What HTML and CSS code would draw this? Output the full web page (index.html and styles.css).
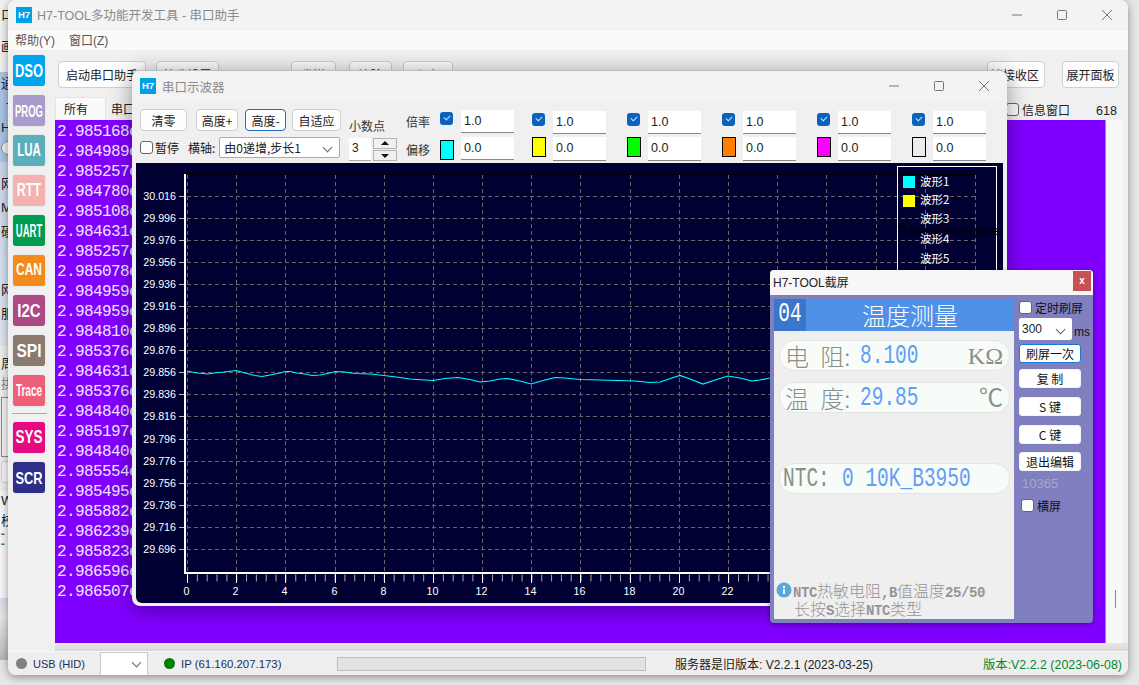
FILE: index.html
```html
<!DOCTYPE html>
<html lang="zh-CN">
<head>
  <meta charset="UTF-8" />
  <title>H7-TOOL 串口助手</title>
  <link rel="stylesheet" href="styles.css">
</head>
<body>
  <!-- window behind, only a sliver shows -->
  <div class="back-win">
    <div class="back-top"><span>口</span><span class="b2">画</span></div>
    <div class="back-blue"><span>通</span><span class="b3">认</span><span>H</span><i class="back-radio"></i></div>
    <div class="back-mid"><span>网</span><span>M</span><span>硬</span><span class="b4">网</span><span>服</span></div>
    <div class="back-low"><span>周</span><span class="muted">拱</span><i class="back-box"></i><i class="back-btn"></i></div>
    <div class="back-end"><span>W</span><span>校</span><span class="tiny">“</span><span class="tiny">“</span></div>
    <div class="back-bar"></div>
  </div>

  <div class="main-win">
    <div class="title-bar">
      <span class="logo">H7</span>
      <span class="title-text">H7-TOOL多功能开发工具 - 串口助手</span>
      <div class="win-btns">
        <svg width="12" height="12" viewBox="0 0 12 12"><path d="M1 6h10" stroke="#777" fill="none"/></svg>
        <svg width="12" height="12" viewBox="0 0 12 12"><rect x="1.5" y="1.5" width="9" height="9" rx="1" stroke="#777" fill="none"/></svg>
        <svg width="12" height="12" viewBox="0 0 12 12"><path d="M1 1l10 10M11 1L1 11" stroke="#777" fill="none"/></svg>
      </div>
    </div>
    <div class="menu-bar"><span>帮助(Y)</span><span>窗口(Z)</span></div>

    <div class="main-body">
      <div class="side">
        <div class="tool t-dso"><span>DSO</span></div>
        <div class="tool t-prog"><span>PROG</span></div>
        <div class="tool t-lua"><span>LUA</span></div>
        <div class="tool t-rtt"><span>RTT</span></div>
        <div class="tool t-uart"><span>UART</span></div>
        <div class="tool t-can"><span>CAN</span></div>
        <div class="tool t-i2c"><span>I2C</span></div>
        <div class="tool t-spi"><span>SPI</span></div>
        <div class="tool t-trace"><span>Trace</span></div>
        <div class="side-line"></div>
        <div class="tool t-sys"><span>SYS</span></div>
        <div class="tool t-scr"><span>SCR</span></div>
      </div>

      <div class="content">
        <div class="top-btns">
          <button class="btn b-start">启动串口助手</button>
          <button class="btn b-set">接收设置</button>
          <button class="btn b-a">发送</button>
          <button class="btn b-b">清除</button>
          <button class="btn b-c">保存</button>
          <button class="btn b-clear">清接收区</button>
          <button class="btn b-open">展开面板</button>
        </div>
        <div class="tab-row">
          <span class="tab tab-on">所有</span>
          <span class="tab">串口</span>
          <span class="info-check"><i class="check"></i>信息窗口</span>
          <span class="count">618</span>
        </div>
        <div class="log-wrap">
          <div class="log">
            <div>2.985168e</div>
            <div>2.984989e</div>
            <div>2.985257e</div>
            <div>2.984780e</div>
            <div>2.985108e</div>
            <div>2.984631e</div>
            <div>2.985257e</div>
            <div>2.985078e</div>
            <div>2.984959e</div>
            <div>2.984959e</div>
            <div>2.984810e</div>
            <div>2.985376e</div>
            <div>2.984631e</div>
            <div>2.985376e</div>
            <div>2.984840e</div>
            <div>2.985197e</div>
            <div>2.984840e</div>
            <div>2.985554e</div>
            <div>2.985495e</div>
            <div>2.985882e</div>
            <div>2.986239e</div>
            <div>2.985823e</div>
            <div>2.986596e</div>
            <div>2.986507e</div>
          </div>
          <div class="scroll"><i></i></div>
        </div>
        <div class="under-log"></div>
      </div>
    </div>

    <div class="status">
      <i class="dot dot-gray"></i><span class="s-usb">USB (HID)</span>
      <span class="s-select"><i class="chev"></i></span>
      <i class="dot dot-green"></i><span class="s-ip">IP (61.160.207.173)</span>
      <span class="s-progress"></span>
      <span class="s-server">服务器是旧版本: V2.2.1 (2023-03-25)</span>
      <span class="s-ver">版本:V2.2.2 (2023-06-08)</span>
    </div>
  </div>

  <!-- scope window -->
  <div class="scope-win">
    <div class="scope-title">
      <span class="logo">H7</span>
      <span class="title-text">串口示波器</span>
      <div class="win-btns">
        <svg width="12" height="12" viewBox="0 0 12 12"><path d="M1 6h10" stroke="#777" fill="none"/></svg>
        <svg width="12" height="12" viewBox="0 0 12 12"><rect x="1.5" y="1.5" width="9" height="9" rx="1" stroke="#777" fill="none"/></svg>
        <svg width="12" height="12" viewBox="0 0 12 12"><path d="M1 1l10 10M11 1L1 11" stroke="#777" fill="none"/></svg>
      </div>
    </div>
    <div class="scope-tools">
      <div class="tools-left">
        <div class="tools-row">
          <button class="btn sb sb-zero">清零</button>
          <button class="btn sb sb-up">高度+</button>
          <button class="btn sb sb-down">高度-</button>
          <button class="btn sb sb-auto">自适应</button>
        </div>
        <div class="tools-row2">
          <i class="check"></i><span class="lab-pause">暂停</span>
          <span class="lab-axis">横轴:</span>
          <span class="axis-select">由0递增,步长1<i class="chev"></i></span>
        </div>
      </div>
      <div class="decimals">
        <div class="dec-label">小数点</div>
        <div class="spin">
          <span class="spin-val">3</span>
          <span class="spin-btns"><b class="up"></b><b class="down"></b></span>
        </div>
      </div>
      <div class="ch-labels"><span>倍率</span><span>偏移</span></div>
      <div class="channels">
        <div class="ch ch-first">
          <i class="ch-check"></i><span class="ch-input">1.0</span>
          <i class="swatch s-cyan"></i><span class="ch-input">0.0</span>
        </div>
        <div class="ch">
          <i class="ch-check"></i><span class="ch-input">1.0</span>
          <i class="swatch s-yellow"></i><span class="ch-input">0.0</span>
        </div>
        <div class="ch">
          <i class="ch-check"></i><span class="ch-input">1.0</span>
          <i class="swatch s-green"></i><span class="ch-input">0.0</span>
        </div>
        <div class="ch">
          <i class="ch-check"></i><span class="ch-input">1.0</span>
          <i class="swatch s-orange"></i><span class="ch-input">0.0</span>
        </div>
        <div class="ch">
          <i class="ch-check"></i><span class="ch-input">1.0</span>
          <i class="swatch s-pink"></i><span class="ch-input">0.0</span>
        </div>
        <div class="ch">
          <i class="ch-check"></i><span class="ch-input">1.0</span>
          <i class="swatch s-gray"></i><span class="ch-input">0.0</span>
        </div>
      </div>
    </div>

    <!-- viewBox uses page coordinates -->
    <svg class="plot" width="867" height="440" viewBox="136 163 867 440">
      <rect x="136" y="163" width="867" height="440" fill="#000033"/>
      <path d="M185 174.5H975" stroke="#000" fill="none"/>
      <g stroke="#666" stroke-dasharray="4 3" fill="none">
        <path d="M187 196.5H975M187 218.5H975M187 240.5H975M187 262.5H975M187 284.5H975M187 306.5H975M187 328.5H975M187 350.5H975M187 372.5H975M187 394.5H975M187 416.5H975M187 439.5H975M187 461.5H975M187 483.5H975M187 505.5H975M187 527.5H975M187 549.5H975"/>
        <path d="M187.5 175V572M236.5 175V572M285.5 175V572M335.5 175V572M384.5 175V572M433.5 175V572M482.5 175V572M531.5 175V572M580.5 175V572M630.5 175V572M679.5 175V572M728.5 175V572M777.5 175V572M826.5 175V572M876.5 175V572M925.5 175V572M975.5 175V572"/>
      </g>
      <path d="M187 371L192 372L198 373L208 374L214 373L224 372L236 370.5L245 373L255 375.5L262 376.5L270 375L280 373L285 371.5L290 371.5L297 373L305 374L312 375.5L320 375L330 373L335 371.5L345 372L355 373.5L370 374L384 375.5L400 377.5L410 379L425 380L433 380.5L445 378.5L458 377.5L470 379.5L480 382L490 381L500 379L507 378.5L520 381L531 384L545 380L555 377.5L565 378L580 379.5L600 380L635 381L650 382.5L660 382L675 377L680 375.5L690 379L703 384L715 380L728 376L740 378L752 381L760 380L770 378" stroke="#00ffff" stroke-width="1.2" fill="none"/>
      <!-- axes -->
      <path d="M185 174V573" stroke="#fff" stroke-width="2" fill="none"/>
      <path d="M184 573H975" stroke="#fff" stroke-width="2" fill="none"/>
      <path d="M179 196.5h5M179 218.5h5M179 240.5h5M179 262.5h5M179 284.5h5M179 306.5h5M179 328.5h5M179 350.5h5M179 372.5h5M179 394.5h5M179 416.5h5M179 439.5h5M179 461.5h5M179 483.5h5M179 505.5h5M179 527.5h5M179 549.5h5" stroke="#bbb" fill="none"/>
      <path d="M187 578H975" stroke="#aaa" stroke-width="7" stroke-dasharray="1 8.84" fill="none"/>
      <path d="M187.5 574V583M236.5 574V583M285.5 574V583M335.5 574V583M384.5 574V583M433.5 574V583M482.5 574V583M531.5 574V583M580.5 574V583M630.5 574V583M679.5 574V583M728.5 574V583M777.5 574V583" stroke="#fff" fill="none"/>
      <g class="tick-y" text-anchor="end">
        <text x="176" y="200">30.016</text>
        <text x="176" y="222">29.996</text>
        <text x="176" y="244">29.976</text>
        <text x="176" y="266">29.956</text>
        <text x="176" y="288">29.936</text>
        <text x="176" y="310">29.916</text>
        <text x="176" y="332">29.896</text>
        <text x="176" y="354">29.876</text>
        <text x="176" y="376">29.856</text>
        <text x="176" y="398">29.836</text>
        <text x="176" y="420">29.816</text>
        <text x="176" y="443">29.796</text>
        <text x="176" y="465">29.776</text>
        <text x="176" y="487">29.756</text>
        <text x="176" y="509">29.736</text>
        <text x="176" y="531">29.716</text>
        <text x="176" y="553">29.696</text>
      </g>
      <g class="tick-y" text-anchor="middle">
        <text x="186.5" y="595">0</text>
        <text x="235.5" y="595">2</text>
        <text x="284.5" y="595">4</text>
        <text x="334.5" y="595">6</text>
        <text x="383.5" y="595">8</text>
        <text x="432.5" y="595">10</text>
        <text x="481.5" y="595">12</text>
        <text x="530.5" y="595">14</text>
        <text x="579.5" y="595">16</text>
        <text x="629.5" y="595">18</text>
        <text x="678.5" y="595">20</text>
        <text x="727.5" y="595">22</text>
      </g>
      <!-- legend -->
      <rect x="897.5" y="166.5" width="99" height="240" stroke="#fff" fill="none"/>
      <rect x="903" y="176" width="12" height="12" fill="#00ffff"/>
      <rect x="903" y="195" width="12" height="12" fill="#ffff00"/>
      <g class="legend-text">
        <text x="920" y="186">波形1</text>
        <text x="920" y="204">波形2</text>
        <text x="920" y="223">波形3</text>
        <text x="920" y="243">波形4</text>
        <text x="920" y="263">波形5</text>
      </g>
      <text class="legend-name" x="898" y="235">PanelWaveName</text>
    </svg>
  </div>

  <!-- screenshot window -->
  <div class="shot-win">
    <div class="shot-title"><span>H7-TOOL截屏</span><b class="shot-close">x</b></div>
    <div class="shot-body">
      <div class="lcd">
        <div class="lcd-head"><span class="lcd-no"><span class="tall">04</span></span><span class="lcd-name">温度测量</span></div>
        <div class="pill pill-1"><span class="p-lab">电 阻:</span><span class="tall p-val">8.100</span><span class="p-unit">KΩ</span></div>
        <div class="pill pill-2"><span class="p-lab">温 度:</span><span class="tall p-val">29.85</span><span class="p-unit">℃</span></div>
        <div class="pill pill-3"><span class="tall p-short">NTC:</span><span class="tall p-val">0 10K_B3950</span></div>
        <div class="lcd-info">
          <svg class="info-icon" width="16" height="16" viewBox="0 0 16 16">
            <circle cx="8" cy="8" r="7.5" fill="#5aa6dc"/>
            <rect x="7" y="7" width="2" height="5" fill="#fff"/>
            <rect x="7" y="4" width="2" height="2" fill="#fff"/>
          </svg>
          <div class="info-lines">
            <div><b>NTC</b>热敏电阻<b>,B</b>值温度<b>25/50</b></div>
            <div class="info-2">长按<b>S</b>选择<b>NTC</b>类型</div>
          </div>
        </div>
      </div>
      <div class="shot-side">
        <div class="side-check"><i class="check"></i>定时刷屏</div>
        <div class="side-select"><span class="sel-box">300<i class="chev"></i></span><span class="ms">ms</span></div>
        <button class="shot-btn shot-focus">刷屏一次</button>
        <button class="shot-btn gap-a">复 制</button>
        <button class="shot-btn gap-b">S 键</button>
        <button class="shot-btn gap-b">C 键</button>
        <button class="shot-btn gap-c">退出编辑</button>
        <div class="shot-num">10365</div>
        <div class="side-check side-check2"><i class="check"></i>横屏</div>
      </div>
    </div>
  </div>
</body>
</html>
```
FILE: styles.css
```css
* {
  box-sizing: border-box;
  margin: 0;
  padding: 0;
}

html, body {
  width: 1139px;
  height: 685px;
  overflow: hidden;
}

body {
  position: relative;
  background: #e6e6e6;
  font-family: "Liberation Sans", "Noto Sans CJK SC", sans-serif;
  font-size: 12px;
  color: #222;
}

i { display: block; font-style: normal; }

/* window behind */
.back-win {
  position: absolute;
  left: 0;
  top: 0;
  width: 30px;
  height: 660px;
  overflow: hidden;
  font-size: 13px;
  line-height: 24px;
  background: #f0f0f0;
}

.back-win span { display: block; padding-left: 1px; white-space: nowrap; }
.back-top { height: 72px; padding-top: 3px; }
.back-top .b2 { margin-top: 8px; }
.back-blue { height: 90px; background: #a9c4e4; padding-top: 0; }
.back-blue span { height: 22px; }
.back-blue .b3 { padding-left: 6px; }
.back-radio { width: 14px; height: 14px; border: 1px solid #888; border-radius: 50%; background: #eee; margin: 3px 0 0 1px; }
.back-mid { height: 184px; background: linear-gradient(#c8d6e8, #dde4ee); padding-top: 10px; }
.back-mid .b4 { margin-top: 34px; }
.back-low { height: 145px; padding-top: 8px; background: #ececec; }
.back-low span { height: 20px; line-height: 20px; }
.back-low .muted { color: #888; }
.back-box { width: 20px; height: 60px; border: 1px solid #888; background: #f4f4f4; margin: 3px 0 4px 1px; }
.back-btn { width: 20px; height: 22px; border: 1px solid #ccc; border-radius: 3px; background: #f6f6f6; margin-left: 1px; }
.back-end { height: 107px; background: #f6f6f6; line-height: 20px; }
.back-end span { height: 20px; }
.back-end .tiny { height: 10px; line-height: 12px; font-size: 11px; }
.back-bar { height: 62px; background: linear-gradient(#d4dbe6 0, #e8e8e8 30%, #b8b8b8 100%); }

/* main window */
.main-win {
  position: absolute;
  left: 8px;
  top: 0;
  width: 1120px;
  height: 675px;
  background: #f0f0f0;
  border-radius: 8px;
  box-shadow: 0 2px 8px rgba(0, 0, 0, 0.4);
  overflow: hidden;
  display: flex;
  flex-direction: column;
}

.title-bar {
  height: 31px;
  flex: none;
  display: flex;
  align-items: center;
  padding: 0 0 2px 8px;
  background: #f3f3f3;
}

.logo {
  width: 16px;
  height: 16px;
  flex: none;
  background: #00a0e9;
  color: #fff;
  font: bold 9.5px/16px "Liberation Sans", sans-serif;
  text-align: center;
}

.title-text {
  margin-left: 5px;
  font-size: 12.5px;
  color: #8a8a8a;
}

.win-btns {
  margin-left: auto;
  display: flex;
  gap: 33px;
  padding-right: 15px;
}

.menu-bar {
  height: 19px;
  flex: none;
  display: flex;
  gap: 14px;
  padding-left: 7px;
  background: #fafafa;
  color: #555;
  line-height: 21px;
}

.main-body {
  flex: 1;
  display: flex;
  min-height: 0;
}

.side {
  width: 47px;
  flex: none;
  padding: 5px 0 0 5px;
  display: flex;
  flex-direction: column;
  gap: 9px;
}

.tool {
  width: 32px;
  height: 31px;
  border-radius: 3px;
  color: #fff;
  font: bold 12px/31px "Liberation Sans", sans-serif;
  text-align: center;
  white-space: nowrap;
  box-shadow: 0 0 1px rgba(0, 0, 0, 0.3);
}

/* the logo letters are condensed and tall */
.tool span { display: inline-block; }

.t-dso { background: #00a4ee; font-size: 13px; }
.t-dso span { transform: scaleY(1.45); }
.t-prog { background: #a99ccc; font-size: 9.5px; }
.t-prog span { transform: scaleY(1.75); }
.t-lua { background: #5aafbb; font-size: 11.5px; }
.t-lua span { transform: scaleY(1.6); }
.t-rtt { background: #f3b1b1; font-size: 12.5px; }
.t-rtt span { transform: scaleY(1.5); }
.t-uart { background: #009c4f; font-size: 9.5px; }
.t-uart span { transform: scaleY(1.85); }
.t-can { background: #f58a1c; font-size: 12px; }
.t-can span { transform: scaleY(1.3); }
.t-i2c { background: #ad4a86; font-size: 15px; }
.t-i2c span { transform: scaleY(1.2); }
.t-spi { background: #8b7a70; font-size: 15.5px; }
.t-spi span { transform: scaleY(1.2); }
.t-trace { background: #ee5f78; font-size: 10px; }
.t-trace span { transform: scaleY(1.7); }
.t-sys { background: #e6097f; font-size: 13.5px; }
.t-sys span { transform: scaleY(1.3); }
.t-scr { background: #2f2e88; font-size: 12.8px; }
.t-scr span { transform: scaleY(1.35); }

.side-line {
  width: 35px;
  height: 1px;
  background: #aaa;
  margin: -2px 0 -1px -1px;
}

.content {
  flex: 1;
  min-width: 0;
  display: flex;
  flex-direction: column;
}

.btn {
  height: 27px;
  background: #fdfdfd;
  border: 1px solid #d0d0d0;
  border-radius: 4px;
  font: 12px "Noto Sans CJK SC", sans-serif;
  color: #222;
}

.top-btns {
  height: 47px;
  padding: 11px 0 0 3px;
  display: flex;
  flex: none;
}

.b-start { width: 88px; }
.b-set { width: 63px; margin-left: 10px; }
.b-a { width: 45px; margin-left: 72px; }
.b-b { width: 43px; margin-left: 13px; }
.b-c { width: 50px; margin-left: 11px; }
.b-clear { width: 58px; margin-left: 534px; text-align: right; padding-right: 5px; }
.b-open { width: 57px; margin-left: 17px; }

.tab-row {
  height: 23px;
  flex: none;
  display: flex;
  align-items: flex-end;
  position: relative;
}

.tab {
  width: 52px;
  height: 21px;
  padding-left: 5px;
  line-height: 20px;
  color: #222;
  font-family: "Noto Sans CJK SC", sans-serif;
}

.tab-on { height: 23px; width: 51px; padding-left: 8px; background: #fafafa; border: 1px solid #e4e4e4; border-bottom: 0; line-height: 21px; }

.info-check {
  margin-left: 848px;
  height: 21px;
  display: flex;
  align-items: center;
  gap: 3px;
  color: #222;
}

.check {
  width: 13px;
  height: 13px;
  flex: none;
  border: 1px solid #666;
  border-radius: 3px;
  background: #fdfdfd;
}

.count {
  margin-left: 26px;
  height: 20px;
  font-size: 12.5px;
  line-height: 22px;
}

.log-wrap {
  flex: 1;
  display: flex;
  min-height: 0;
}

.log {
  flex: 1;
  min-width: 0;
  background: #8000ff;
  padding: 2px 0 0 2px;
  color: #efe6ff;
  font: 16px/20px "Liberation Mono", monospace;
  letter-spacing: -0.6px;
  overflow: hidden;
}

.log div { height: 20px; white-space: nowrap; }

.scroll {
  width: 17px;
  flex: none;
  margin-right: 6px;
  background: #f8f8f8;
  border-left: 1px solid #999;
  position: relative;
}

.scroll i {
  position: absolute;
  left: 9px;
  top: 470px;
  width: 1px;
  height: 18px;
  background: #888;
}

.under-log {
  height: 8px;
  flex: none;
  background: linear-gradient(#e6e6e6, #d8d8d8);
}

.status {
  height: 24px;
  flex: none;
  display: flex;
  align-items: center;
  background: #eeeeee;
  border-top: 1px solid #f8f8f8;
  position: relative;
  font-size: 11.4px;
  color: #1c2f5c;
}

.dot {
  width: 11px;
  height: 11px;
  border-radius: 50%;
  flex: none;
}

.dot-gray { background: #808080; margin-left: 8px; }
.dot-green { background: #008000; margin-left: 16px; }
.s-usb { margin-left: 6px; width: 67px; font-size: 11px; }
.s-select { width: 48px; height: 24px; background: #fff; border: 1px solid #ccc; position: relative; display: block; }
.s-select .chev { position: absolute; right: 7px; top: 6px; }
.s-ip { margin-left: 6px; width: 156px; }
.s-progress { width: 309px; height: 14px; background: #e2e2e2; border: 1px solid #bdbdbd; }
.s-server { margin-left: 29px; color: #222; font-size: 12px; }
.s-ver { margin-left: auto; padding-right: 6px; color: #008a2e; font-size: 12.4px; }

.chev {
  width: 7px;
  height: 7px;
  border-right: 1px solid #666;
  border-bottom: 1px solid #666;
  transform: rotate(45deg);
}

/* scope window */
.scope-win {
  position: absolute;
  left: 132px;
  top: 70px;
  width: 875px;
  height: 536px;
  background: #f0f0f0;
  border-top: 1px solid #bbb;
  border-radius: 8px;
  box-shadow: 0 3px 22px rgba(0, 0, 0, 0.4);
  overflow: hidden;
}

.scope-title {
  height: 30px;
  display: flex;
  align-items: center;
  padding-left: 8px;
  background: #f3f3f3;
}

.scope-title .win-btns { padding-right: 17px; }
.scope-title .title-text { margin-left: 6px; }

.scope-tools {
  height: 62px;
  padding-left: 8px;
  display: flex;
  font-family: "Noto Sans CJK SC", sans-serif;
}

.tools-left { width: 202px; flex: none; }

.tools-row {
  display: flex;
  margin-top: 8px;
}

.sb { height: 22px; }
.sb-zero { width: 47px; }
.sb-up { width: 42px; margin-left: 9px; }
.sb-down { width: 41px; margin-left: 7px; border: 1px solid #1a6fc0; }
.sb-auto { width: 49px; margin-left: 6px; }

.tools-row2 {
  display: flex;
  align-items: center;
  height: 21px;
  margin-top: 6px;
}

.lab-pause { margin-left: 2px; }
.lab-axis { margin-left: 9px; }

.axis-select {
  margin-left: 4px;
  width: 121px;
  height: 21px;
  display: flex;
  align-items: center;
  justify-content: space-between;
  padding: 0 8px 0 4px;
  background: #fff;
  border: 1px solid #aaa;
  border-radius: 2px;
}

.decimals { width: 57px; margin-left: 7px; flex: none; }
.dec-label { margin-top: 17px; line-height: 16px; color: #333; }

.spin { display: flex; margin-top: 4px; }

.spin-val {
  width: 22px;
  height: 23px;
  background: #fff;
  border-bottom: 1px solid #aaa;
  padding-left: 3px;
  line-height: 21px;
  font-family: "Liberation Sans", sans-serif;
}

.spin-btns {
  margin-left: 2px;
  display: flex;
  flex-direction: column;
  gap: 1px;
}

.spin-btns b {
  width: 24px;
  height: 11px;
  background: #f0f0f0;
  border: 1px solid #b4b4b4;
  position: relative;
}

.spin-btns b::after {
  content: "";
  position: absolute;
  left: 7px;
  border-left: 4px solid transparent;
  border-right: 4px solid transparent;
}

.spin-btns .up::after { top: 2px; border-bottom: 4px solid #111; }
.spin-btns .down::after { top: 3px; border-top: 4px solid #111; }

.ch-labels {
  width: 34px;
  flex: none;
  display: flex;
  flex-direction: column;
  padding-top: 13px;
  gap: 12px;
  line-height: 16px;
  color: #333;
}

.channels { display: flex; gap: 21px; }

.ch {
  width: 74px;
  display: grid;
  grid-template-columns: 21px 53px;
  grid-template-rows: 23px 24px;
  row-gap: 3px;
  padding-top: 10px;
}

.ch-first { margin-right: -3px; padding-top: 9px; row-gap: 4px; grid-template-rows: 23px 23px; }

.ch-check {
  width: 13px;
  height: 13px;
  margin-top: 2px;
  background: #0a62bf;
  border-radius: 3px;
  position: relative;
}

.ch-check::after {
  content: "";
  position: absolute;
  left: 4px;
  top: 3px;
  width: 5px;
  height: 3px;
  border-left: 1px solid #cfe0f5;
  border-bottom: 1px solid #cfe0f5;
  transform: rotate(-45deg);
}

.ch-input {
  background: #fff;
  border-bottom: 1px solid #888;
  padding-left: 3px;
  line-height: 22px;
  font: 12.5px/22px "Liberation Sans", sans-serif;
  color: #222;
}

.swatch {
  width: 14px;
  height: 20px;
  border: 1px solid #000;
}

.ch-first .swatch { margin-top: 3px; }
.s-cyan { background: #00ffff; }
.s-yellow { background: #ffff00; }
.s-green { background: #00ff00; }
.s-orange { background: #ff8000; }
.s-pink { background: #ff00ff; }
.s-gray { background: #ececec; }

.plot {
  display: block;
  margin-left: 4px;
  border-radius: 0 0 0 6px;
}

.tick-y text {
  fill: #fff;
  font: 10.7px "Liberation Sans", sans-serif;
}

.legend-text text {
  fill: #fff;
  font: 11.5px "Noto Sans CJK SC", sans-serif;
}

.legend-name {
  fill: #000;
  font: 13px "Liberation Sans", sans-serif;
}

/* screenshot window */
.shot-win {
  position: absolute;
  left: 770px;
  top: 270px;
  width: 323px;
  height: 353px;
  background: #807fbf;
  border-radius: 4px;
  box-shadow: 0 1px 5px rgba(0, 0, 0, 0.4);
  overflow: hidden;
}

.shot-title {
  height: 25px;
  padding: 0 0 3px 3px;
  display: flex;
  align-items: center;
  justify-content: space-between;
  background: #f7f7f7;
  font-size: 12px;
  color: #222;
}

.shot-close {
  width: 18px;
  height: 20px;
  margin-right: 2px;
  background: #c75050;
  color: #fff;
  font: bold 10px/20px "Liberation Sans", sans-serif;
  text-align: center;
}

.shot-body {
  display: flex;
  padding: 4px 0 0 4px;
}

.lcd {
  width: 240px;
  height: 320px;
  flex: none;
  background: #efefef;
  display: flex;
  flex-direction: column;
}

.lcd-head {
  height: 32px;
  flex: none;
  display: flex;
  background: #5091e8;
  color: #fff;
}

.lcd-no {
  width: 32px;
  background: #3a76cc;
  text-align: center;
  line-height: 32px;
}

.lcd-name {
  flex: 1;
  text-align: center;
  font: 300 24px/31px "Noto Sans CJK SC", sans-serif;
}

/* thin tall digits like the device's bitmap font */
.tall {
  display: inline-block;
  font: 19.5px/30px "Liberation Mono", monospace;
  transform: scaleY(1.4);
}

.pill {
  height: 31px;
  flex: none;
  margin: 0 4px 0 5px;
  padding: 0 6px 0 5px;
  display: flex;
  align-items: center;
  background: #f8fcf9;
  border: 1px solid #e2e5e2;
  border-radius: 15px;
  white-space: pre;
}

.pill-1 { margin-top: 9px; }
.pill-2 { margin-top: 11px; }
.pill-3 { margin-top: 50px; }

.p-lab {
  width: 75px;
  flex: none;
  color: #8a8f8a;
  font: 300 24px/30px "Noto Sans CJK SC", sans-serif;
  word-spacing: 6px;
}

.p-short {
  width: 57px;
  flex: none;
  color: #8a8f8a;
  margin-left: -2px;
  margin-right: 2px;
}

.p-val { color: #5f9ff2; }

.p-unit {
  margin-left: auto;
  color: #8a8f8a;
  font: 24px/30px "Liberation Serif", serif;
}

.lcd-info {
  margin-top: auto;
  padding: 0 0 2px 2px;
  display: flex;
  color: #959595;
  font: 300 16px/18px "Noto Sans CJK SC", sans-serif;
}

.lcd-info b {
  font: bold 14px/18px "Liberation Mono", monospace;
  letter-spacing: -0.4px;
}

.info-icon { margin-top: 1px; flex: none; }
.info-lines { margin-left: 1px; white-space: nowrap; }
.info-lines div { height: 18px; }
.info-2 { margin-left: 1px; }

.shot-side {
  margin-left: 5px;
  width: 72px;
  flex: none;
  font-family: "Noto Sans CJK SC", sans-serif;
}

.side-check {
  display: flex;
  align-items: center;
  gap: 3px;
  height: 17px;
  margin-top: 0;
  color: #111;
}

.side-select {
  display: flex;
  align-items: flex-end;
  margin-top: 2px;
}

.sel-box {
  width: 53px;
  height: 22px;
  display: flex;
  align-items: center;
  justify-content: space-between;
  padding: 0 8px 0 3px;
  background: #fff;
  border-radius: 2px;
  font: 12px "Liberation Sans", sans-serif;
}

.ms { margin-left: 2px; font: 12px/16px "Liberation Sans", sans-serif; color: #111; }

.shot-btn {
  display: block;
  width: 62px;
  height: 19px;
  background: #fff;
  border: 1px solid #f4f4f4;
  border-radius: 3px;
  font: 12px/16px "Noto Sans CJK SC", sans-serif;
  color: #111;
}

.shot-focus { margin-top: 4px; border: 1px solid #1a78d8; }
.gap-a { margin-top: 6px; }
.gap-b { margin-top: 9px; }
.gap-c { margin-top: 8px; }

.shot-num {
  margin: 4px 0 0 3px;
  height: 18px;
  line-height: 18px;
  font-size: 13px;
  color: #a8a8c8;
  font-family: "Liberation Sans", sans-serif;
}

.side-check2 { margin: 4px 0 0 2px; }
```
